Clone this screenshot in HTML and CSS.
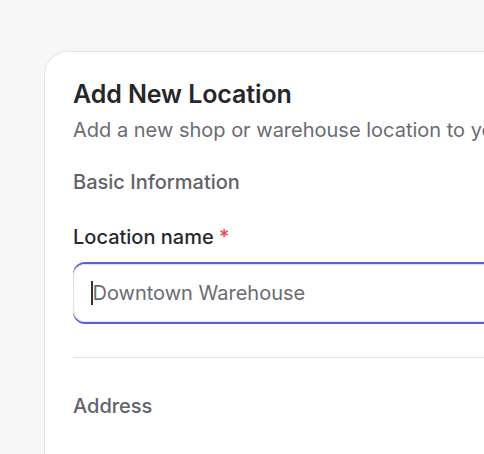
FILE: index.html
```html
<!DOCTYPE html>
<html>
<head>
<meta charset="utf-8">
<link rel="stylesheet" href="styles.css">
</head>
<body>
<div class="page">
  <div class="card">
    <h1 class="title">Add New Location</h1>
    <p class="subtitle">Add a new shop or warehouse location to your inventory</p>
    <h2 class="section">Basic Information</h2>
    <label class="label">Location name <span class="req">*</span></label>
    <div class="input"><span class="caret"></span><span class="value">Downtown Warehouse</span></div>
    <hr class="divider">
    <h2 class="section section-gap">Address</h2>
  </div>
</div>
</body>
</html>
```

FILE: styles.css
```css
html, body {
  margin: 0;
  padding: 0;
  background: #f7f7f8;
  overflow: hidden;
  font-family: Inter, "Noto Sans", sans-serif;
}
.page {
  padding: 51px 0 0 44px;
}
.card {
  width: 700px;
  min-height: 500px;
  box-sizing: border-box;
  background: #fff;
  border: 1.5px solid #e4e4e7;
  border-radius: 24px;
  padding: 24.5px 0 0 28px;
}
.title {
  margin: 0;
  font-size: 25px;
  line-height: 34px;
  font-weight: 600;
  color: #27272a;
  letter-spacing: -0.1px;
}
.subtitle {
  margin: 5px 0 0;
  font-size: 20px;
  line-height: 28px;
  color: #6b6b73;
  white-space: nowrap;
}
.section {
  margin: 24px 0 0;
  font-size: 20px;
  line-height: 28px;
  font-weight: 500;
  color: #62626b;
}
.label {
  display: block;
  margin: 27px 0 0;
  font-size: 20px;
  line-height: 28px;
  font-weight: 500;
  color: #2a2a2e;
}
.req { color: #ef4444; }
.input {
  margin-top: 13px;
  height: 58px;
  box-sizing: border-box;
  border: 1px solid #e0e0e8;
  border-radius: 12px;
  box-shadow: 0 2px 0 0 #5b5fd6, 0 -2px 0 0 #5b5fd6;
  display: flex;
  align-items: center;
  padding-left: 17px;
  font-size: 20px;
  color: #6b6b73;
}
.caret {
  width: 1.5px;
  height: 24px;
  background: #333;
}
.divider {
  margin: 35px 0 0;
  border: 0;
  border-top: 1.5px solid #e4e4e7;
}
.section-gap {
  margin-top: 34.5px;
}
```
